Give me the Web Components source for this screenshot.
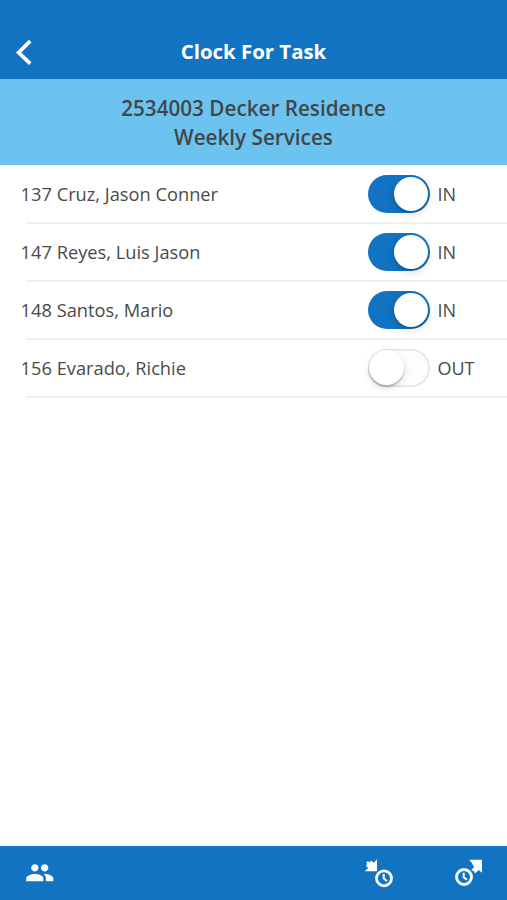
<!DOCTYPE html>
<html lang="en">
<head>
<meta charset="utf-8">
<title>Clock For Task</title>
<style>
html, body { margin: 0; height: 100%; }
body { font-family: "Open Sans", "Noto Sans", sans-serif; color: #4a4a4a; background: #fff; }
</style>
</head>
<body>
<clock-app></clock-app>
<script>
class BaseElement extends HTMLElement {
  constructor() {
    super();
    this.attachShadow({ mode: "open" }).innerHTML = this.render();
  }
}

customElements.define("app-header", class extends BaseElement {
  render() {
    return `<style>
      :host { display: grid; grid-template-columns: 60px 1fr 60px; align-items: center; box-sizing: border-box;
        height: 79px; padding-top: 25px; background: #1173c1; color: #fff; }
      svg { display: block; margin-left: 15px; }
      h1 { margin: 0; text-align: center; font-size: 20.4px; line-height: 26px; padding-bottom: 2px; font-weight: 700; }
    </style>
    <svg width="19" height="28" viewBox="0 0 19 28"><path d="M15.200 3.200 3.700 14.500 15.200 25.600" fill="none" stroke="#fff" stroke-width="3.800"/></svg>
    <h1><slot></slot></h1>`;
  }
});

customElements.define("job-banner", class extends BaseElement {
  render() {
    return `<style>
      :host { display: flex; flex-direction: column; align-items: center; box-sizing: border-box; height: 86px;
        padding-top: 15px; background: #6cc3f0; color: #434648; font-size: 20.7px; line-height: 28.6px; font-weight: 600; }
    </style><slot></slot>`;
  }
});

customElements.define("toggle-switch", class extends BaseElement {
  render() {
    return `<style>
      :host { display: flex; align-items: center; box-sizing: border-box; width: 62.5px; height: 38px; padding: 0 2px 0 1px;
        border-radius: 19px; background: #fdfdfd; box-shadow: inset 0 0 0 1.5px #e2e2e2; }
      :host([on]) { justify-content: flex-end; background: #1173c1; box-shadow: none; }
      i { width: 35px; height: 35px; border-radius: 50%; background: #fff;
        box-shadow: 0 3px 8px rgba(0,0,0,.12), 0 2px 2px rgba(0,0,0,.22); }
      :host([on]) i { width: 34px; height: 34px; box-shadow: 0 3px 8px rgba(0,0,0,.15), 0 1px 2px rgba(0,0,0,.2); }
    </style><i></i>`;
  }
});

customElements.define("worker-row", class extends BaseElement {
  render() {
    const on = this.getAttribute("status") === "IN" ? "on" : "";
    return `<style>
      :host { position: relative; display: grid; grid-template-columns: 346.5px 62.5px 1fr; align-items: center;
        box-sizing: border-box; height: 57.9px; padding-left: 21px; font-size: 18px; line-height: 24px; }
      :host::after { content: ""; position: absolute; left: 26px; right: 0; bottom: -1px; height: 1.5px; background: #f1f1f1; }
      .name { font-size: 18.25px; margin-left: -0.4px; }
      .status { padding-left: 7.5px; }
    </style>
    <span class="name"><slot></slot></span><toggle-switch ${on}></toggle-switch><span class="status">${this.getAttribute("status")}</span>`;
  }
});

customElements.define("app-toolbar", class extends BaseElement {
  render() {
    const clock = (x, y) => `<circle cx="${x}" cy="${y}" r="7.500" fill="none" stroke="#fff" stroke-width="2.800"/>
      <path d="M${x - .3} ${y - 4.3}v4.600l3.300 2.400" fill="none" stroke="#fff" stroke-width="2"/>`;
    return `<style>
      :host { display: flex; align-items: center; box-sizing: border-box; height: 54px; padding: 0 23px 0 25px;
        background: #1173c1; }
      svg { display: block; }
      .people { margin-right: auto; }
      .in { margin-right: 60px; }
    </style>
    <svg class="people" width="29.5" height="29.5" viewBox="0 0 24 24" fill="#fff"><path d="M16 11c1.66 0 2.99-1.34 2.99-3S17.66 5 16 5s-3 1.34-3 3 1.34 3 3 3zm-8 0c1.66 0 2.99-1.34 2.99-3S9.66 5 8 5 5 6.34 5 8s1.34 3 3 3zm0 2c-2.33 0-7 1.17-7 3.5V19h14v-2.500C15 14.170 10.330 13 8 13zm8 0c-.29 0-.62.020-.97.050 1.160.840 1.970 1.970 1.970 3.450V19h6v-2.500c0-2.330-4.670-3.500-7-3.500z"/></svg>
    <svg class="in" width="30" height="30" viewBox="364 858 30 30">${clock(384, 878.3)}
      <path d="M377 859.300v12h-12.300l3.500-3.200-2.300-2.300 1.400-1.800-1.100-1.600 1.900-1.200 1.700 1.300 1.200-2 2.700 2.300z" fill="#fff"/></svg>
    <svg width="30" height="30" viewBox="454 858 30 30">${clock(464, 877)}
      <path d="M482 859.800v13l-3.400-2.700-3.500 3.500-1.200-2.400-2.700-1.200 3.300-3.400-1.500-1.200-1-2.300-2.800-3.300z" fill="#fff"/></svg>`;
  }
});

customElements.define("clock-app", class extends BaseElement {
  render() {
    return `<style>
      :host { display: flex; flex-direction: column; height: 100vh; overflow: hidden; }
      main { flex: 1; }
    </style>
    <app-header>Clock For Task</app-header>
    <job-banner><span>2534003 Decker Residence</span><span>Weekly Services</span></job-banner>
    <main>
      <worker-row status="IN">137 Cruz, Jason Conner</worker-row>
      <worker-row status="IN">147 Reyes, Luis Jason</worker-row>
      <worker-row status="IN">148 Santos, Mario</worker-row>
      <worker-row status="OUT">156 Evarado, Richie</worker-row>
    </main>
    <app-toolbar></app-toolbar>`;
  }
});
</script>
</body>
</html>
